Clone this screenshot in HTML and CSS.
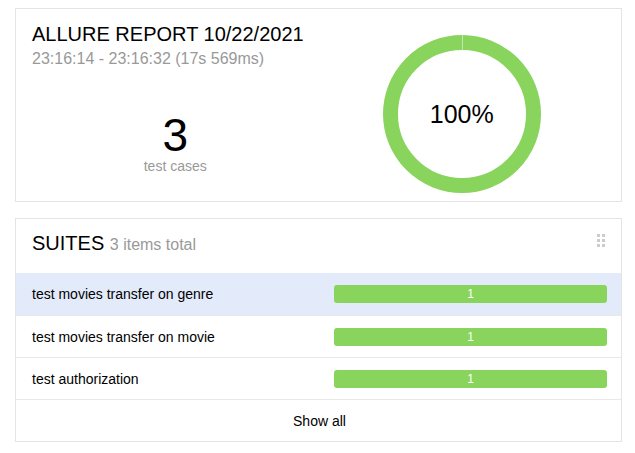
FILE: index.html
```html
<!DOCTYPE html>
<html lang="en">
<head>
<meta charset="utf-8">
<title>Allure Report</title>
<link rel="stylesheet" href="styles.css">
</head>
<body>
  <section class="card summary">
    <div class="summary-left">
      <h1 class="title">ALLURE REPORT 10/22/2021</h1>
      <div class="subtitle">23:16:14 - 23:16:32 (17s 569ms)</div>
      <div class="stat">
        <div class="stat-value">3</div>
        <div class="stat-label">test cases</div>
      </div>
    </div>
    <div class="summary-right">
      <div class="donut">
        <svg width="158" height="158" viewBox="0 0 158 158">
          <circle cx="79" cy="79" r="71.5" fill="none" stroke="#88d45c" stroke-width="15"
                  stroke-dasharray="448.2 1.05" stroke-dashoffset="-0.5" transform="rotate(-90 79 79)"/>
        </svg>
        <span class="donut-label">100%</span>
      </div>
    </div>
  </section>

  <section class="card suites">
    <div class="suites-header">
      <h2 class="suites-title">SUITES <span class="suites-count">3 items total</span></h2>
      <span class="drag" aria-hidden="true"><i></i><i></i><i></i><i></i><i></i><i></i></span>
    </div>
    <div class="row row-active">
      <span class="row-name">test movies transfer on genre</span>
      <span class="bar">1</span>
    </div>
    <div class="row">
      <span class="row-name">test movies transfer on movie</span>
      <span class="bar">1</span>
    </div>
    <div class="row">
      <span class="row-name">test authorization</span>
      <span class="bar">1</span>
    </div>
    <div class="row row-footer">Show all</div>
  </section>
</body>
</html>
```
FILE: styles.css
```css
* { box-sizing: border-box; }

body {
  margin: 8px 13px 0 15px;
  background: #fff;
  font-family: "Liberation Sans", Arial, Helvetica, sans-serif;
  color: #000;
}

.card {
  border: 1px solid #e4e4e4;
  background: #fff;
}

.summary {
  display: grid;
  grid-template-columns: 1fr 1fr;
  padding: 14px 16px 8px;
  height: 194px;
}

.title {
  margin: 0;
  font-size: 20px;
  font-weight: normal;
  line-height: 23px;
}

.subtitle {
  margin-top: 4px;
  font-size: 16px;
  line-height: 18px;
  color: #999;
}

.stat {
  margin-top: 44px;
  text-align: center;
}

.stat-value {
  font-size: 46px;
  line-height: 46px;
}

.stat-label {
  font-size: 14px;
  line-height: 16px;
  color: #999;
}

.summary-right {
  display: flex;
  justify-content: center;
  padding-top: 12px;
}

.donut {
  position: relative;
  width: 158px;
  height: 158px;
}

.donut svg { display: block; }

.donut-label {
  position: absolute;
  inset: 0;
  display: flex;
  align-items: center;
  justify-content: center;
  font-size: 25px;
}

.suites {
  margin-top: 16px;
}

.suites-header {
  display: flex;
  justify-content: space-between;
  align-items: flex-start;
  padding: 13px 16px 0;
  height: 54px;
}

.suites-title {
  margin: 0;
  font-size: 20px;
  font-weight: normal;
  line-height: 23px;
}

.suites-count {
  font-size: 16px;
  color: #999;
}

.drag {
  display: grid;
  grid-template-columns: 3px 3px;
  gap: 2px;
  margin-top: 2px;
}

.drag i {
  display: block;
  width: 3px;
  height: 3px;
  background: #ccc;
}

.row {
  display: grid;
  grid-template-columns: 1fr 273px;
  align-items: center;
  height: 42px;
  padding: 0 14px 0 16px;
  border-top: 1px solid #e8e8e8;
  font-size: 14px;
}

.row-active {
  background: #e3ebfb;
  border-top: none;
}

.bar {
  display: block;
  height: 18px;
  line-height: 18px;
  border-radius: 3px;
  background: #88d45c;
  color: #fff;
  font-size: 12px;
  text-align: center;
}

.row-footer {
  display: flex;
  justify-content: center;
}
```
